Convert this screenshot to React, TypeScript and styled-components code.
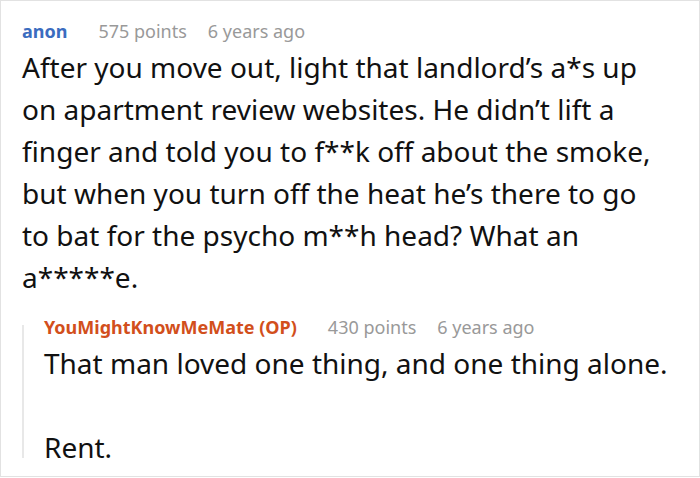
import React from 'react'
import styled, { createGlobalStyle } from 'styled-components'

const GlobalStyle = createGlobalStyle`
    html, body {
        margin: 0;
        padding: 0;
        background: #ffffff;
    }
    body {
        font-family: "Noto Sans", "Open Sans", sans-serif;
    }
`

const Card = styled.div`
    box-sizing: border-box;
    width: 700px;
    height: 477px;
    border: 1px solid #e2e2e2;
    padding: 15px 35px 0 21px;
    overflow: hidden;
    background: #fff;
`

const Meta = styled.div`
    display: flex;
    align-items: baseline;
    gap: 21px;
    font-size: 18px;
    line-height: 30px;
    white-space: nowrap;
`

const Author = styled.span<{ $op?: boolean }>`
    font-weight: 700;
    color: ${p => (p.$op ? '#d24f1c' : '#3b6cbf')};
    margin-right: 10px;
`

const Faint = styled.span`
    color: #999;
`

const Body = styled.p`
    margin: 0;
    font-size: 28px;
    line-height: 42px;
    color: #111;
    white-space: pre-line;
`

const Reply = styled.div`
    position: relative;
    margin-top: 14px;
    margin-right: -20px;
    padding-left: 22px;

    &::before {
        content: '';
        position: absolute;
        left: 0;
        top: 13px;
        bottom: 10px;
        width: 2px;
        background: #e8e8e8;
    }
`

type CommentProps = {
    author: string
    points: number
    age: string
    op?: boolean
    text: string
}

const Comment = ({ author, points, age, op, text }: CommentProps) => (
    <>
        <Meta>
            <Author $op={op}>{author}</Author>
            <Faint>{points} points</Faint>
            <Faint>{age}</Faint>
        </Meta>
        <Body>{text}</Body>
    </>
)

const App = () => {
    return (
        <>
            <GlobalStyle />
            <Card>
                <Comment
                    author="anon"
                    points={575}
                    age="6 years ago"
                    text="After you move out, light that landlord’s a*s up on apartment review websites. He didn’t lift a finger and told you to f**k off about the smoke, but when you turn off the heat he’s there to go to bat for the psycho m**h head? What an a*****e."
                />
                <Reply>
                    <Comment
                        author="YouMightKnowMeMate (OP)"
                        points={430}
                        age="6 years ago"
                        op
                        text={'That man loved one thing, and one thing alone.\n\nRent.'}
                    />
                </Reply>
            </Card>
        </>
    )
}

export default App
